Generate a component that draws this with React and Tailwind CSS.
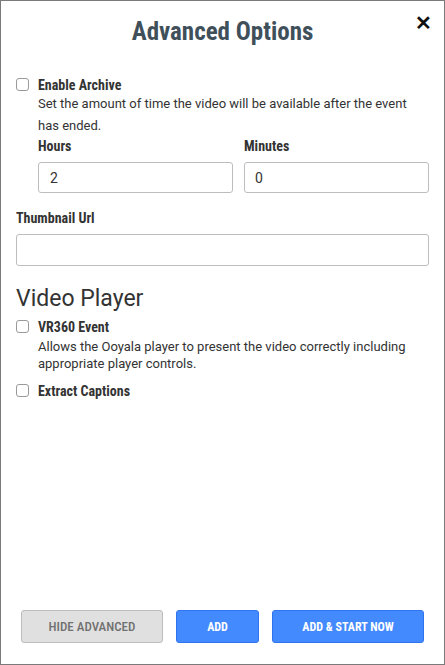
const Check = () => (
  <span className="mt-[1px] h-[13px] w-[13px] shrink-0 rounded-[3px] border border-[#9a9a9a] bg-white" />
);

const Label = ({ children, className = '' }) => (
  <div className={`font-stretch-condensed text-[14px] font-bold text-[#333] ${className}`}>{children}</div>
);

const App = () => {
  return (
    <div className="flex h-[665px] w-[445px] flex-col border border-[#7a7a7a] bg-white font-['Roboto',sans-serif] text-[#333]">
      {/* Header */}
      <div className="relative pt-[15px] text-center">
        <h1 className="font-stretch-condensed text-[25px] font-bold leading-[32px] text-[#3f505b]">Advanced Options</h1>
        <button className="absolute top-[12px] right-[12px] text-[20px] leading-none font-bold text-[#111]">✕</button>
      </div>

      <div className="flex-1 px-[15px] pt-[29px]">
        {/* Enable Archive */}
        <div className="flex gap-[9px]">
          <Check />
          <div className="flex-1">
            <Label className="leading-[16px]">Enable Archive</Label>
            <p className="mt-0 text-[13px] leading-[22px]">
              Set the amount of time the video will be available after the event has ended.
            </p>
            <div className="mt-0 grid grid-cols-[195px_1fr] gap-[11px]">
              <div>
                <Label className="leading-[18px]">Hours</Label>
                <input
                  defaultValue="2"
                  className="mt-[7px] h-[31px] w-full rounded-[3px] border border-[#bdbdbd] px-[11px] text-[14px] text-[#333] outline-none"
                />
              </div>
              <div>
                <Label className="leading-[18px]">Minutes</Label>
                <input
                  defaultValue="0"
                  className="mt-[7px] h-[31px] w-full rounded-[3px] border border-[#bdbdbd] px-[10px] text-[14px] text-[#333] outline-none"
                />
              </div>
            </div>
          </div>
        </div>

        {/* Thumbnail */}
        <Label className="mt-[16px] leading-[18px]">Thumbnail Url</Label>
        <input className="mt-[7px] h-[32px] w-full rounded-[3px] border border-[#bdbdbd] px-[10px] text-[14px] outline-none" />

        {/* Video Player */}
        <h2 className="mt-[19px] text-[23px] leading-[28px] text-[#333]">Video Player</h2>
        <div className="mt-[6px] flex gap-[9px]">
          <Check />
          <div>
            <Label className="leading-[16px]">VR360 Event</Label>
            <p className="mt-[3px] text-[13px] leading-[17px]">
              Allows the Ooyala player to present the video correctly including appropriate player controls.
            </p>
          </div>
        </div>
        <div className="mt-[11px] flex gap-[9px]">
          <Check />
          <Label className="leading-[16px]">Extract Captions</Label>
        </div>
      </div>

      {/* Footer */}
      <div className="flex gap-[13px] pb-[21px] pl-[20px]">
        <button className="font-stretch-condensed h-[33px] w-[142px] rounded-[3px] border border-[#bdbdbd] bg-[#e0e0e0] text-[13px] font-medium text-[#707070]">
          HIDE ADVANCED
        </button>
        <button className="font-stretch-condensed h-[33px] w-[83px] rounded-[3px] border border-[#2f74ee] bg-[#448aff] text-[12px] font-bold text-white">
          ADD
        </button>
        <button className="font-stretch-condensed h-[33px] w-[152px] rounded-[3px] border border-[#2f74ee] bg-[#448aff] text-[12px] font-bold text-white">
          ADD &amp; START NOW
        </button>
      </div>
    </div>
  );
};

export default App;
